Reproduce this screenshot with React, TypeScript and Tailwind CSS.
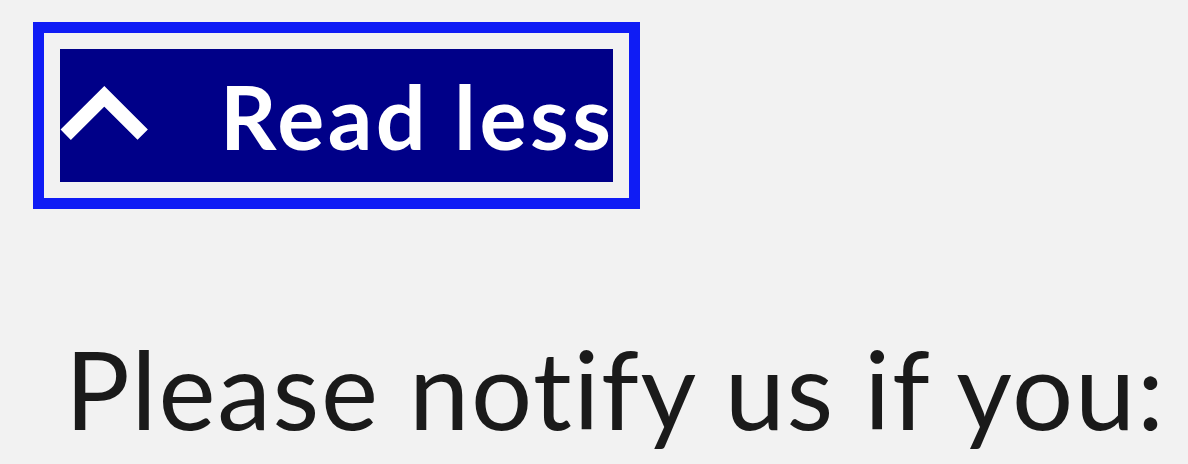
export default function App() {
  return (
    <main className="h-[464px] overflow-hidden bg-[#f2f2f2] pl-[33px] pt-[22px] font-['Lato',sans-serif] [font-variant-ligatures:none]">
      {/* focus ring around the toggle */}
      <div className="inline-flex border-[11px] border-[#0f1cf5] p-[16px]">
        <button className="flex h-[133px] w-[553px] items-center whitespace-nowrap bg-[#000088] text-white">
          <svg width="88" height="54" viewBox="0 0 88 54" className="mb-[5px] shrink-0">
            <polyline
              points="5.7,48.7 44.3,10.3 82.7,48.7"
              fill="none"
              stroke="currentColor"
              strokeWidth="14.6"
              strokeLinecap="butt"
              strokeLinejoin="miter"
            />
          </svg>
          <span className="ml-[72px] text-[88px] font-bold leading-none tracking-[3.5px]">Read less</span>
        </button>
      </div>
      <p className="mt-[125px] whitespace-nowrap pl-[32px] text-[108px] leading-none tracking-[1.7px] text-[#1a1a1a]">
        Please notify us if you:
      </p>
    </main>
  )
}
